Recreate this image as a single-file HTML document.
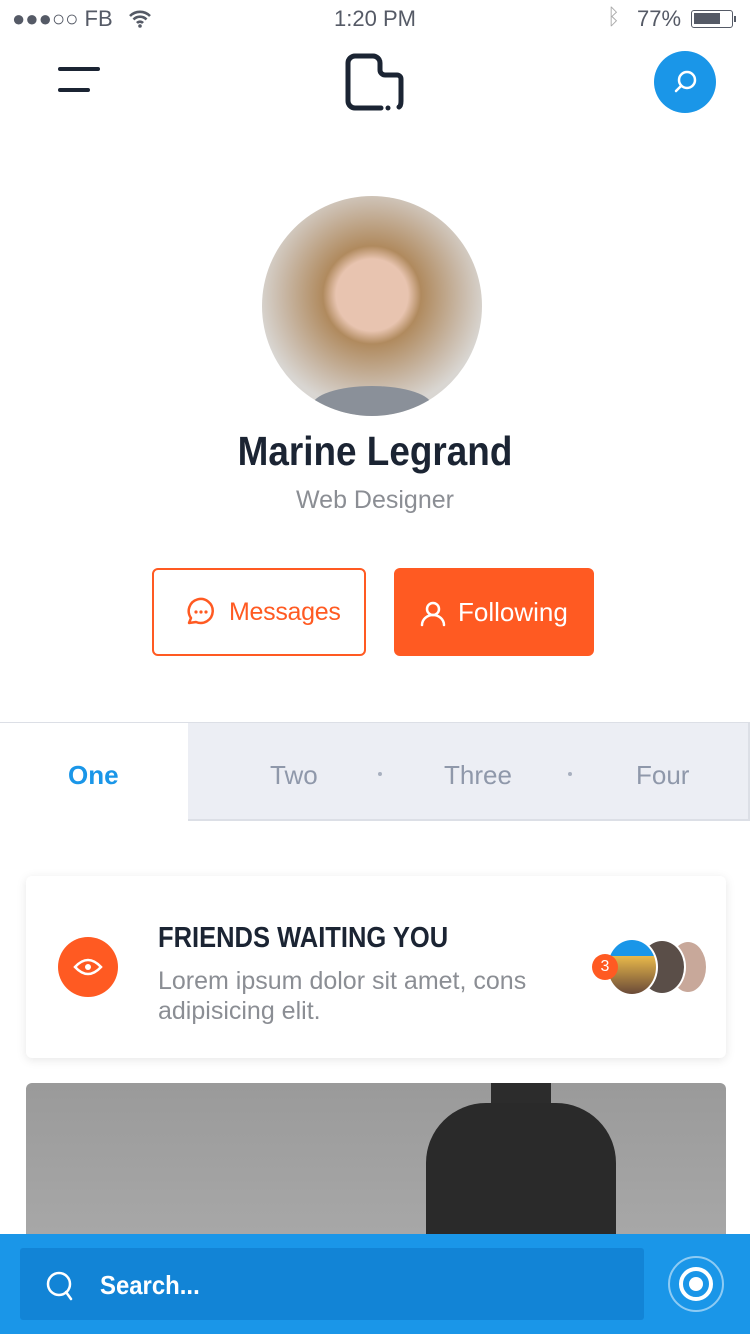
<!DOCTYPE html>
<html><head><meta charset="utf-8"><style>
*{margin:0;padding:0;box-sizing:border-box}
html,body{width:750px;height:1334px;overflow:hidden}
body{background:#fff;font-family:"Liberation Sans",sans-serif;position:relative}
.abs{position:absolute}
</style></head><body>
<div class="abs" style="left:12px;top:6px;font-size:22px;color:#555a66">●●●○○ FB</div>
<svg class="abs" style="left:128px;top:9px" width="24" height="20" viewBox="0 0 24 20"><path d="M2 7a14 14 0 0 1 20 0M5.5 10.5a9 9 0 0 1 13 0M9 14a4 4 0 0 1 6 0" stroke="#555a66" stroke-width="2.6" fill="none"/><circle cx="12" cy="17" r="1.8" fill="#555a66"/></svg>
<div class="abs" style="left:0;width:750px;top:6px;text-align:center;font-size:22px;color:#555a66">1:20 PM</div>
<div class="abs" style="left:607px;top:4px;font-size:22px;color:#aaa">ᛒ</div>
<div class="abs" style="left:637px;top:6px;font-size:22px;color:#555a66">77%</div>
<div class="abs" style="left:691px;top:10px;width:42px;height:18px;border:1.5px solid #555a66;border-radius:3px"><div style="margin:2px;width:26px;height:11px;background:#555a66"></div></div>
<div class="abs" style="left:734px;top:16px;width:2px;height:6px;background:#555a66"></div>
<div class="abs" style="left:58px;top:67px;width:42px;height:4px;background:#1b2433;border-radius:2px"></div>
<div class="abs" style="left:58px;top:88px;width:32px;height:4px;background:#1b2433;border-radius:2px"></div>
<svg class="abs" style="left:345px;top:52px" width="62" height="60" viewBox="0 0 62 60"><path d="M36 56H10a7 7 0 0 1-7-7V11a7 7 0 0 1 7-7h18a7 7 0 0 1 7 7v7a5 5 0 0 0 5 5h12a4 4 0 0 1 4 4v22q0 5-2 6" stroke="#1b2433" stroke-width="5" fill="none" stroke-linecap="round"/><circle cx="43" cy="56" r="2.5" fill="#1b2433"/></svg>
<div class="abs" style="left:654px;top:51px;width:62px;height:62px;border-radius:50%;background:#1a96e8"></div>
<svg class="abs" style="left:670px;top:67px" width="30" height="30" viewBox="0 0 30 30"><circle cx="17" cy="13" r="8" stroke="#fff" stroke-width="2.5" fill="none"/><path d="M11 19l-5 5" stroke="#fff" stroke-width="2.5" stroke-linecap="round"/></svg>
<div class="abs" style="left:262px;top:196px;width:220px;height:220px;border-radius:50%;background:radial-gradient(circle at 50% 45%,#e8c4b0 0 22%,#b08a5e 30%,#c9b9a8 55%,#d9d6d2 70%);overflow:hidden"><div style="position:absolute;left:50px;top:190px;width:120px;height:40px;background:#8a9099;border-radius:50%"></div></div>
<div class="abs" style="left:0;width:750px;top:428px;text-align:center;font-size:41px;font-weight:bold;color:#1b2433;transform:scaleX(.9);transform-origin:center">Marine Legrand</div>
<div class="abs" style="left:0;width:750px;top:486px;text-align:center;font-size:25px;color:#8b8e94">Web Designer</div>
<div class="abs" style="left:152px;top:568px;width:214px;height:88px;border:2px solid #ff5a22;border-radius:6px;color:#ff5a22;font-size:25px;line-height:84px;padding-left:75px;letter-spacing:-0.3px">Messages</div>
<svg class="abs" style="left:183px;top:597px" width="36" height="32" viewBox="0 0 36 32"><path d="M6 26l2-5a12 12 0 1 1 5 4z" stroke="#ff5a22" stroke-width="2.5" fill="none" stroke-linejoin="round"/><circle cx="13" cy="15" r="1.6" fill="#ff5a22"/><circle cx="18" cy="15" r="1.6" fill="#ff5a22"/><circle cx="23" cy="15" r="1.6" fill="#ff5a22"/></svg>
<div class="abs" style="left:394px;top:568px;width:200px;height:88px;background:#ff5a22;border-radius:6px;color:#fff;font-size:26px;line-height:88px;padding-left:64px">Following</div>
<svg class="abs" style="left:419px;top:599px" width="28" height="28" viewBox="0 0 28 28"><circle cx="14" cy="10" r="6" stroke="#fff" stroke-width="2.5" fill="none"/><path d="M3 26a11 10 0 0 1 22 0" stroke="#fff" stroke-width="2.5" fill="none" stroke-linecap="round"/></svg>
<div class="abs" style="left:0;top:722px;width:750px;height:1px;background:#dcdfe6"></div>
<div class="abs" style="left:188px;top:723px;width:562px;height:98px;background:#eceef4;border-bottom:2px solid #dcdfe6;border-right:2px solid #dcdfe6"></div>
<div class="abs" style="left:68px;top:760px;font-size:26px;color:#1a96e8;font-weight:bold">One</div>
<div class="abs" style="left:270px;top:760px;font-size:26px;color:#8f98aa">Two</div>
<div class="abs" style="left:444px;top:760px;font-size:26px;color:#8f98aa">Three</div>
<div class="abs" style="left:636px;top:760px;font-size:26px;color:#8f98aa">Four</div>
<div class="abs" style="left:378px;top:772px;width:4px;height:4px;border-radius:50%;background:#a8b0bf"></div>
<div class="abs" style="left:568px;top:772px;width:4px;height:4px;border-radius:50%;background:#a8b0bf"></div>
<div class="abs" style="left:26px;top:876px;width:700px;height:182px;background:#fff;border-radius:6px;box-shadow:0 2px 10px rgba(0,0,0,.1)"></div>
<div class="abs" style="left:58px;top:937px;width:60px;height:60px;border-radius:50%;background:#ff5a22"></div>
<svg class="abs" style="left:72px;top:953px" width="32" height="28" viewBox="0 0 32 28"><path d="M3 14q13-14 26 0q-13 14-26 0z" stroke="#fff" stroke-width="2.5" fill="none"/><circle cx="16" cy="14" r="3" fill="#fff"/></svg>
<div class="abs" style="left:158px;top:922px;font-size:29px;color:#1b2433;font-weight:bold;transform:scaleX(.88);transform-origin:left">FRIENDS WAITING YOU</div>
<div class="abs" style="left:158px;top:966px;font-size:25px;color:#8b8e94;line-height:30px;width:400px">Lorem ipsum dolor sit amet, cons adipisicing elit.</div>
<div class="abs" style="left:668px;top:940px;width:40px;height:54px;border-radius:50%;background:#c8a89a;border:2px solid #fff"></div>
<div class="abs" style="left:638px;top:939px;width:48px;height:56px;border-radius:50%;background:#5a4e48;border:2px solid #fff"></div>
<div class="abs" style="left:606px;top:938px;width:52px;height:58px;border-radius:50%;background:linear-gradient(180deg,#1a96e8 30%,#e8b84a 30%,#6a4a38);border:2px solid #fff"></div>
<div class="abs" style="left:592px;top:954px;width:26px;height:26px;border-radius:50%;background:#ff5a22;color:#fff;font-size:16px;text-align:center;line-height:26px">3</div>
<div class="abs" style="left:26px;top:1083px;width:700px;height:251px;border-radius:6px 6px 0 0;background:linear-gradient(180deg,#9a9a9a,#b0b0b0);overflow:hidden">
<div style="position:absolute;left:465px;top:0;width:60px;height:50px;background:#2c2c2c;border-radius:0 0 30px 30px"></div>
<div style="position:absolute;left:400px;top:20px;width:190px;height:240px;background:#2a2a2a;border-radius:60px 60px 0 0"></div></div>
<div class="abs" style="left:0;top:1234px;width:750px;height:100px;background:#1a96e8"></div>
<div class="abs" style="left:20px;top:1248px;width:624px;height:72px;background:#1284d6;border-radius:3px"></div>
<svg class="abs" style="left:44px;top:1270px" width="32" height="32" viewBox="0 0 32 32"><circle cx="15" cy="14" r="11" stroke="#fff" stroke-width="2.5" fill="none"/><path d="M22 22l5 7" stroke="#fff" stroke-width="2.5" stroke-linecap="round"/></svg>
<div class="abs" style="left:100px;top:1270px;font-size:26px;color:#fff;font-weight:bold;transform:scaleX(.92);transform-origin:left">Search...</div>
<div class="abs" style="left:668px;top:1256px;width:56px;height:56px;border-radius:50%;border:2px solid rgba(255,255,255,.5)"></div>
<div class="abs" style="left:679px;top:1267px;width:34px;height:34px;border-radius:50%;border:4px solid #fff"></div>
<div class="abs" style="left:689px;top:1277px;width:14px;height:14px;border-radius:50%;background:#fff"></div>
</body></html>
